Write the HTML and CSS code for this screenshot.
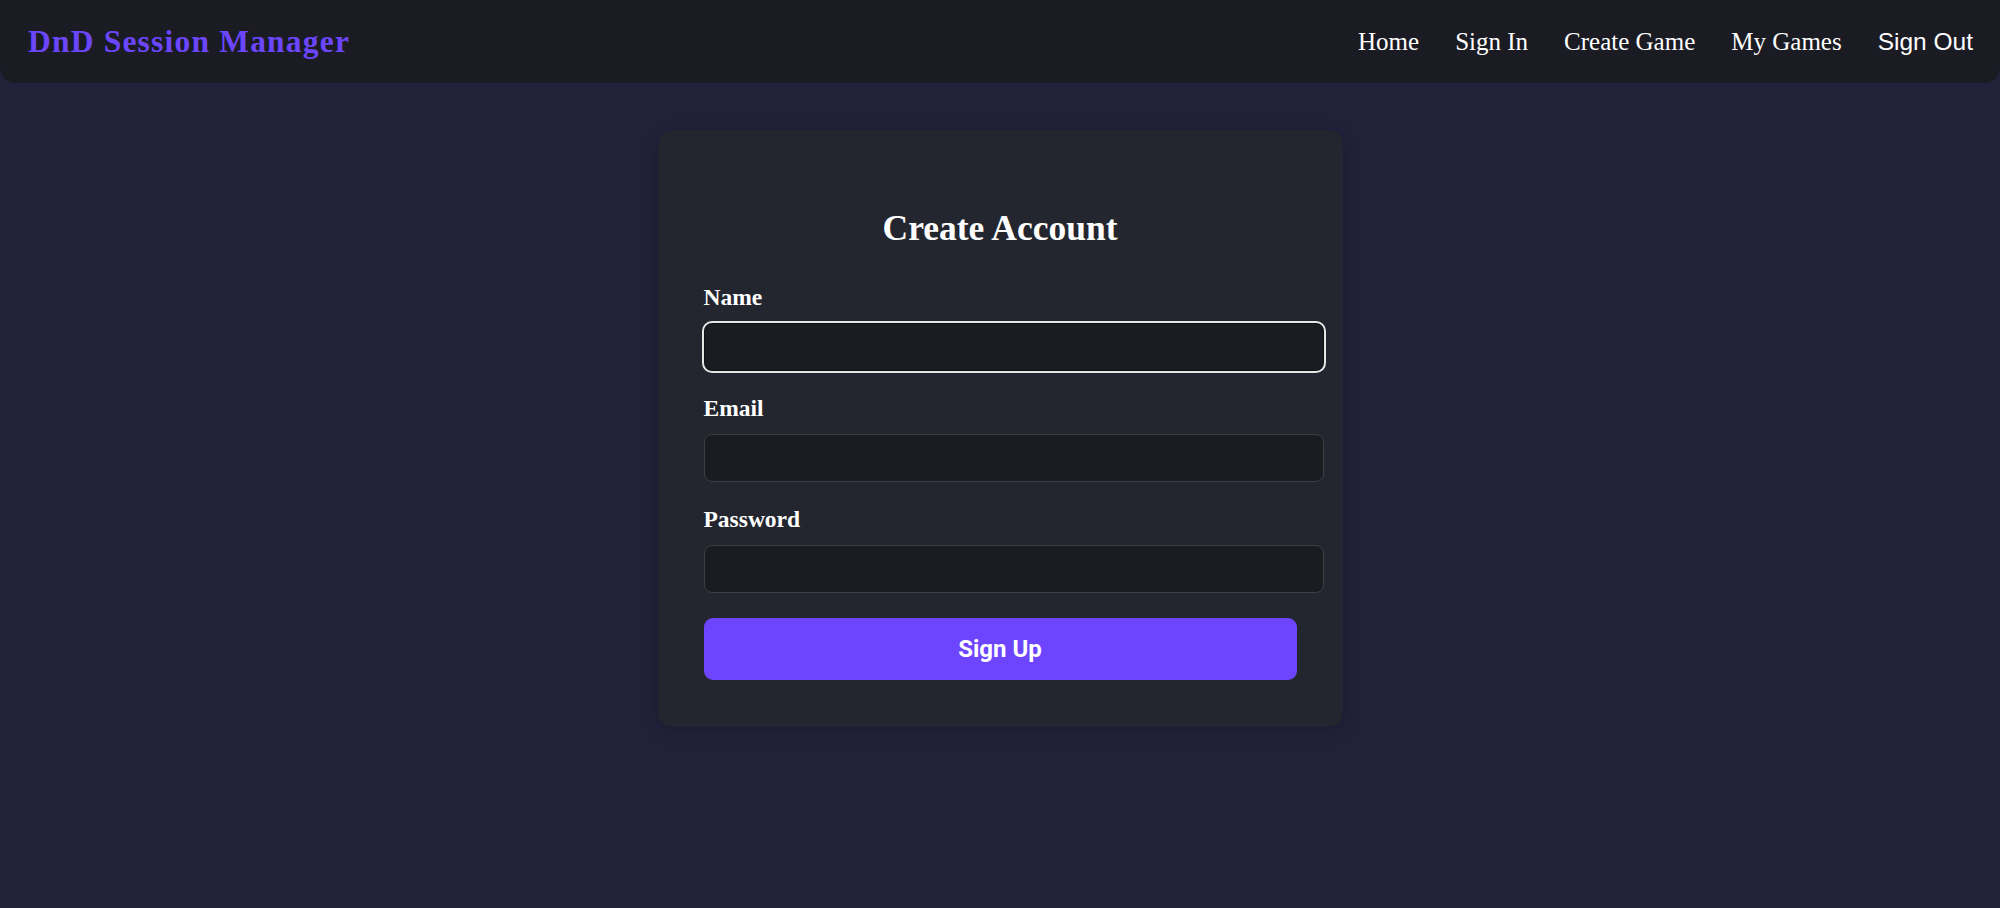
FILE: index.html
```html
<!DOCTYPE html>
<html lang="en">
<head>
<meta charset="utf-8">
<title>DnD Session Manager</title>
<link rel="stylesheet" href="styles.css">
</head>
<body>
<nav class="navbar">
  <a class="brand" href="#">DnD Session Manager</a>
  <ul class="nav-links">
    <li><a href="#">Home</a></li>
    <li><a href="#">Sign In</a></li>
    <li><a href="#">Create Game</a></li>
    <li><a href="#">My Games</a></li>
    <li><button class="signout" type="button">Sign Out</button></li>
  </ul>
</nav>
<main class="page">
  <section class="card">
    <h2 class="card-title">Create Account</h2>
    <form class="form">
      <div class="group">
        <label class="label" for="name">Name</label>
        <input class="input focused" id="name" type="text">
      </div>
      <div class="group">
        <label class="label" for="email">Email</label>
        <input class="input" id="email" type="email">
      </div>
      <div class="group">
        <label class="label" for="password">Password</label>
        <input class="input" id="password" type="password">
      </div>
      <button class="submit" type="button">Sign Up</button>
    </form>
  </section>
</main>
</body>
</html>
```

FILE: styles.css
```css
html, body {
  margin: 0;
  padding: 0;
}
body {
  background: #21223a;
  min-height: 908px;
  font-family: "Liberation Serif", "Times New Roman", serif;
  color: #ffffff;
}
.navbar {
  height: 83px;
  box-sizing: border-box;
  padding: 0 27px 0 28px;
  display: flex;
  align-items: center;
  justify-content: space-between;
  background: #1a1b23;
  border-radius: 0 0 16px 16px;
}
.brand {
  font-family: "Liberation Serif", "Times New Roman", serif;
  font-weight: bold;
  font-size: 31.5px;
  letter-spacing: 1.2px;
  color: #6b46fb;
  text-decoration: none;
  line-height: 1;
}
.nav-links {
  list-style: none;
  margin: 0;
  padding: 0;
  display: flex;
  align-items: center;
  gap: 36px;
}
.nav-links a {
  font-family: "Liberation Serif", "Times New Roman", serif;
  font-size: 25px;
  color: #ffffff;
  text-decoration: none;
}
.signout {
  font-family: "Liberation Sans", Arial, sans-serif;
  font-size: 24.5px;
  color: #ffffff;
  background: none;
  border: none;
  padding: 0;
  cursor: pointer;
}
.page {
  display: flex;
  justify-content: center;
  padding-top: 47px;
}
.card {
  width: 685px;
  box-sizing: border-box;
  padding: 46px 46px 47px;
  background: #23262e;
  border-radius: 15px;
  box-shadow: 0 4px 18px rgba(0, 0, 0, 0.18);
}
.card-title {
  margin: 32px 0 36px;
  font-size: 35.5px;
  line-height: 40px;
  font-weight: bold;
  text-align: center;
}
.form {
  display: flex;
  flex-direction: column;
}
.group {
  display: flex;
  flex-direction: column;
  margin-bottom: 24px;
}
.group:last-of-type {
  margin-bottom: 25px;
}
.label {
  font-size: 23.5px;
  line-height: 26px;
  font-weight: bold;
  margin-bottom: 13px;
}
.input {
  height: 48px;
  box-sizing: border-box;
  width: calc(100% + 27px);
  padding: 0 12px;
  background: #1a1c22;
  border: 1.5px solid #3c3e44;
  border-radius: 8px;
  color: #ffffff;
  font-size: 18px;
  outline: none;
}
.input.focused {
  border-color: #0e0f12;
  outline: 2px solid #e6e6e6;
  outline-offset: 0;
}
.submit {
  width: 100%;
  height: 62px;
  border: none;
  border-radius: 9px;
  background: #6e45ff;
  color: #ffffff;
  font-family: Roboto, "Liberation Sans", Arial, sans-serif;
  font-weight: bold;
  font-size: 24px;
  cursor: pointer;
}
```
